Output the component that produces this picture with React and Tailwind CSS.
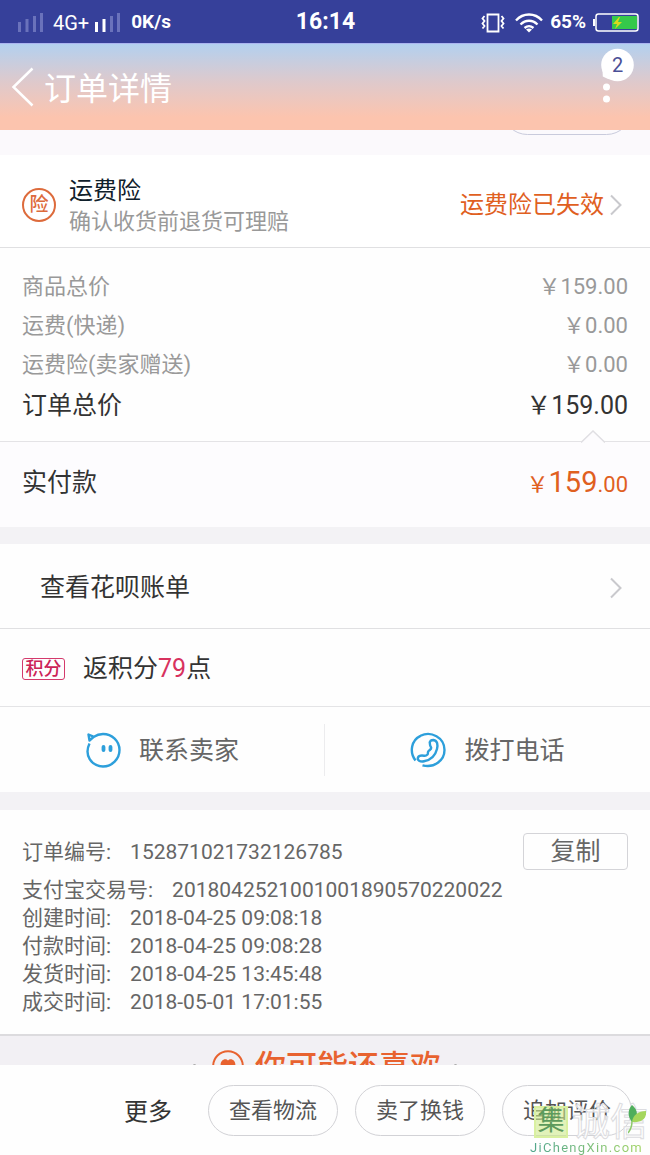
import React from 'react'

const prices = [
  { label: "商品总价", value: "￥159.00" },
  { label: "运费(快递)", value: "￥0.00" },
  { label: "运费险(卖家赠送)", value: "￥0.00" },
]

const orderInfo = [
  { label: "支付宝交易号:", value: "2018042521001001890570220022" },
  { label: "创建时间:", value: "2018-04-25 09:08:18" },
  { label: "付款时间:", value: "2018-04-25 09:08:28" },
  { label: "发货时间:", value: "2018-04-25 13:45:48" },
  { label: "成交时间:", value: "2018-05-01 17:01:55" },
]

const actions = ["查看物流", "卖了换钱", "追加评价"]

function Arrow() {
  return (
    <svg className="w-[14px] h-[22px] shrink-0" viewBox="0 0 14 22" fill="none" stroke="#c9c9cd" strokeWidth="2">
      <path d="M2 1.5 11.5 11 2 20.5" />
    </svg>
  )
}

function StatusBar() {
  return (
    <div className="grid grid-cols-[1fr_auto_1fr] items-center h-[43px] pt-[2px] pl-[18px] pr-[11px] bg-[#36409a] text-white">
      <div className="flex items-center">
        <svg className="w-[26px] h-[19px]" viewBox="0 0 26 19" fill="#6a72bb">
          <path d="M0 9h3v10H0zM7.5 6h3v13h-3zM15 3h3v16h-3zM22 0h3v19h-3z" />
        </svg>
        <span className="ml-[9px] text-[20px]">4G+</span>
        <svg className="ml-[6px] w-[26px] h-[19px]" viewBox="0 0 26 19" fill="#6a72bb">
          <path fill="#fff" d="M0 9h3v10H0zM7.5 6h3v13h-3z" />
          <path d="M15 3h3v16h-3zM22 0h3v19h-3z" />
        </svg>
        <span className="ml-[10px] text-[19px] font-bold">0K/s</span>
      </div>
      <div className="pr-[6px] text-[23px] font-bold">16:14</div>
      <div className="flex items-center justify-end">
        {/* vibrate */}
        <svg className="w-[24px] h-[20px]" viewBox="0 0 24 20" fill="none" stroke="#fff" strokeWidth="1.8">
          <path d="M6.500 1.500h11v17h-11zM3.500 3 1.500 5.500 3.500 8 1.500 10.500 3.500 13 1.500 15.500M20.500 3l2 2.500-2 2.500 2 2.500-2 2.500 2 2.500" />
        </svg>
        {/* wifi */}
        <svg className="ml-[10px] w-[28px] h-[20px]" viewBox="0 0 28 20" fill="none" stroke="#fff" strokeWidth="2.300">
          <path d="M1 7.500C8-.5 20-.5 27 7.500M5.500 11.500c5-5 12-5 17 0M9.500 15c3-2.500 6-2.500 9 0" />
          <path d="M14 19.500 11 16.500q3-2 6 0z" fill="#fff" stroke="none" />
        </svg>
        <span className="ml-[7px] text-[19px] font-bold">65%</span>
        <svg className="ml-[6px] w-[47px] h-[19px]" viewBox="0 0 47 19">
          <path d="M2 6v7" stroke="#fff" strokeWidth="2" />
          <rect x="4" y="1" width="42" height="17" rx="2.500" fill="none" stroke="#fff" strokeWidth="1.500" />
          <path d="M20 3h25v13H20z" fill="#35c94b" />
          <path d="M27 4 21 11h4l-2 5 7-7h-4l2-5z" fill="#d8d91c" />
        </svg>
      </div>
    </div>
  )
}

function Header() {
  return (
    <header className="relative flex items-center h-[87px] pl-[11px] border-t border-[#aab4f0] bg-linear-to-b from-[#b2d0ef] via-[#dfc9cb] via-45% to-[#fcc4ae] to-85% text-white">
      <button type="button" aria-label="返回">
        <svg className="w-[23px] h-[40px]" viewBox="0 0 23 40" fill="none" stroke="#fff" strokeWidth="2.500">
          <path d="M21.500 1.500 2.500 20l19 18.500" />
        </svg>
      </button>
      <h1 className="ml-[10px] pt-[3px] text-[32px] leading-[40px]">订单详情</h1>
      <button type="button" aria-label="菜单" className="absolute right-[16px] top-[4px]">
        <svg className="w-[34px] h-[56px]" viewBox="0 0 34 56" fill="#fff">
          <circle cx="17.500" cy="17" r="16.300" />
          <path d="M2.500 21.500l.3 7q5 3 9 3z" />
          <circle cx="6.500" cy="39" r="3.500" />
          <circle cx="6.500" cy="51" r="3.500" />
        </svg>
        <span className="absolute left-0 top-0 w-full pl-px text-center text-[20px] leading-[35px] text-[#4b4f96]">2</span>
      </button>
    </header>
  )
}

function Watermark() {
  return (
    <div className="absolute right-0 bottom-0 w-[120px] pointer-events-none">
      <div className="flex items-center">
        <span className="ml-[4px] w-[34px] h-[32px] shrink-0 border-2 border-[#d9f0a0] bg-[#cdea8a]/60 text-center text-[27px] leading-[27px] text-[#5d9a5c]">集</span>
        <span className="ml-[4px] text-[38px] leading-[38px] text-white/80 [-webkit-text-stroke:1px_#dcdce0]">诚信</span>
      </div>
      <svg className="absolute right-[4px] top-[2px] w-[18px] h-[30px]" viewBox="0 0 18 30">
        <path d="M4 17C-1 11 0 4 4 0c6 5 7 11 0 17z" fill="#4fae5c" />
        <path d="M4 17C5 10 10 6 18 6c1 8-5 12-14 11z" fill="#a5d65c" />
        <path d="M4 16q0 7-4 12" fill="none" stroke="#8cc96a" strokeWidth="1.500" />
      </svg>
      <div className="text-[13px] leading-[14px] tracking-widest whitespace-nowrap bg-linear-to-r from-[#4fa58c] to-[#a5d65c] bg-clip-text text-transparent">JiChengXin.com</div>
    </div>
  )
}

function App() {
  return (
    <div className="min-h-screen flex flex-col bg-[#f3f2f5] overflow-hidden font-[Roboto,'Noto_Sans_CJK_SC',sans-serif] text-[#333]">
      <StatusBar />
      <Header />

      {/* tail of the previous card */}
      <div className="flex items-end justify-end h-[25px] pr-[18px] pb-[20px] bg-[#fbf9fc] overflow-hidden">
        <div className="w-[130px] h-[51px] shrink-0 rounded-full border border-[#c9cbdc]"></div>
      </div>

      <section className="flex items-center h-[93px] pl-[22px] pr-[27px] pt-[8px] bg-white border-b border-[#e0e0e2]">
        <div className="w-[34px] h-[34px] rounded-full border-2 border-[#dd6b3c] text-center text-[19px] leading-[30px] font-medium text-[#dd6b3c]">险</div>
        <div className="ml-[13px] pt-[2px]">
          <h2 className="text-[24px] leading-[31px] text-[#10202b]">运费险</h2>
          <p className="text-[22px] leading-[30px] text-[#999]">确认收货前退货可理赔</p>
        </div>
        <a href="#" className="ml-auto flex items-center gap-[5px] text-[24px] leading-[30px] text-[#e0601f]">
          运费险已失效
          <Arrow />
        </a>
      </section>

      {/* prices */}
      <section className="px-[22px] pt-[19px] pb-[13px] bg-[#fefefe] border-b border-[#e4e3e6]">
        {prices.map((item) => (
          <div key={item.label} className="flex justify-between text-[22px] leading-[39px] text-[#999]">
            <span>{item.label}</span>
            <span>{item.value}</span>
          </div>
        ))}
        <div className="flex justify-between text-[25px] leading-[44px]">
          <span>订单总价</span>
          <span>￥159.00</span>
        </div>
      </section>
      <section className="relative flex items-center justify-between px-[22px] h-[85px] pb-[4px] bg-[#fdfcfe] text-[25px]">
        <svg className="absolute right-[45px] -top-[12px] w-[24px] h-[13px]" viewBox="0 0 24 13" fill="#fdfcfe" stroke="#e0dfe3" strokeWidth="1.500">
          <path d="M0 12.500 12 1l12 11.500" />
        </svg>
        <span>实付款</span>
        <span className="text-[22px] text-[#e0601f]">￥<span className="text-[29px]">159</span>.00</span>
      </section>

      <a href="#" className="mt-[17px] flex items-center justify-between h-[85px] pt-[3px] pl-[40px] pr-[27px] bg-[#fefefe] border-b border-[#e0e0e2] text-[25px]">
        查看花呗账单
        <Arrow />
      </a>
      <section className="flex items-center h-[78px] pt-[2px] px-[22px] bg-[#fefefe] border-b border-[#e4e4e6]">
        <span className="w-[43px] h-[22px] rounded-[3px] border border-[#d43a6c] text-center text-[18px] leading-[19px] font-medium text-[#cc2458]">积分</span>
        <span className="ml-[18px] text-[25px]">返积分<span className="text-[#d8325e]">79</span>点</span>
      </section>
      <section className="grid grid-cols-2 items-center h-[85px] bg-[#fefefe] text-[25px] text-[#666]">
        <button type="button" className="flex items-center justify-center gap-[18px] h-[52px] border-r border-[#ececee]">
          <svg className="w-[36px] h-[36px]" viewBox="0 0 36 36" fill="none" stroke="#2d9fdb" strokeWidth="2.400">
            <path d="M4.500 11.500C-1 23 6 34 18 34.500 27 34.500 34.500 27 34.500 18 34.500 9 27 2 18 2c-3.500 0-6.500 1-9 2.800L3.500 2.500l1 6 4-3.500" strokeLinejoin="round" />
            <path d="M18.500 15v3M25.500 15v3" strokeWidth="3.800" strokeLinecap="round" />
          </svg>
          <span className="pt-[3px]">联系卖家</span>
        </button>
        <button type="button" className="flex items-center justify-center gap-[18px] h-[52px]">
          <svg className="w-[36px] h-[36px]" viewBox="0 0 36 36" fill="none" stroke="#2d9fdb" strokeWidth="2.400">
            <path d="M5.500 28.500C-1 20 1.500 8 10.500 3.800 21-1.500 34.500 5.500 34.500 18c0 10.500-10.500 18.500-22 15.300" />
            <path d="M20 12.500c-1-4 1.500-4.500 3.500-4.500 4 .5 4.500 5 3.500 9-1.500 6-6 11-13 12.300-4 .7-7-1-6-3.800 1-2.500 4.500-2 6-1.800 1.500.3 2.500-.2 3.500-1.200.8-1 0-2 .8-3.200 1-1.500 3-1.800 2.900-3.500-.1-1.200-1.200-1.500-1.200-3.300z" strokeLinejoin="round" />
          </svg>
          <span className="pt-[3px]">拨打电话</span>
        </button>
      </section>

      {/* order info */}
      <section className="mt-[18px] px-[22px] pt-[23px] pb-[18px] bg-[#fefefe] text-[21px] leading-[28px] text-[#666]">
        <div className="flex items-center mb-[6px]">
          <span>订单编号:</span>
          <span className="ml-[19px]">152871021732126785</span>
          <button type="button" className="ml-auto w-[105px] h-[37px] rounded-[4px] border border-[#d4d4d8] text-[25px] leading-[36px]">复制</button>
        </div>
        {orderInfo.map((item) => (
          <div key={item.label} className="flex">
            <span>{item.label}</span>
            <span className="ml-[19px]">{item.value}</span>
          </div>
        ))}
      </section>

      {/* recommend title, cut by the bottom bar */}
      <div className="flex-1 basis-[31px] h-[31px] max-h-[31px] border-t-2 border-[#dcdbde] bg-[#f2f0f4] overflow-hidden">
        <div className="flex items-center justify-center pt-[10px] text-[#e8622f]">
          <span className="mr-[16px] w-[3px] h-[3px] rounded-full bg-[#aaa]"></span>
          <svg className="w-[32px] h-[32px]" viewBox="0 0 32 32">
            <circle cx="16" cy="16" r="14.800" fill="none" stroke="#e8622f" strokeWidth="2" />
            <path d="M16 25 9 17c-2-6 4-10 7-6.500 3-3.500 9 .5 7 6.500z" fill="#e8622f" />
          </svg>
          <h2 className="ml-[11px] pt-[3px] text-[31px] leading-[36px] font-medium">你可能还喜欢</h2>
          <span className="ml-[13px] w-[3px] h-[3px] rounded-full bg-[#aaa]"></span>
        </div>
      </div>

      <footer className="relative mt-auto flex items-center justify-end gap-[17px] h-[90px] pr-[18px] bg-[#fefefe]">
        <button type="button" className="mr-[19px] pt-[3px] text-[24px]">更多</button>
        {actions.map((text) => (
          <button key={text} type="button" className="w-[130px] h-[51px] rounded-full border border-[#d2d2d6] text-[22px] text-[#555]">{text}</button>
        ))}
        <Watermark />
      </footer>
    </div>
  )
}

export default App
